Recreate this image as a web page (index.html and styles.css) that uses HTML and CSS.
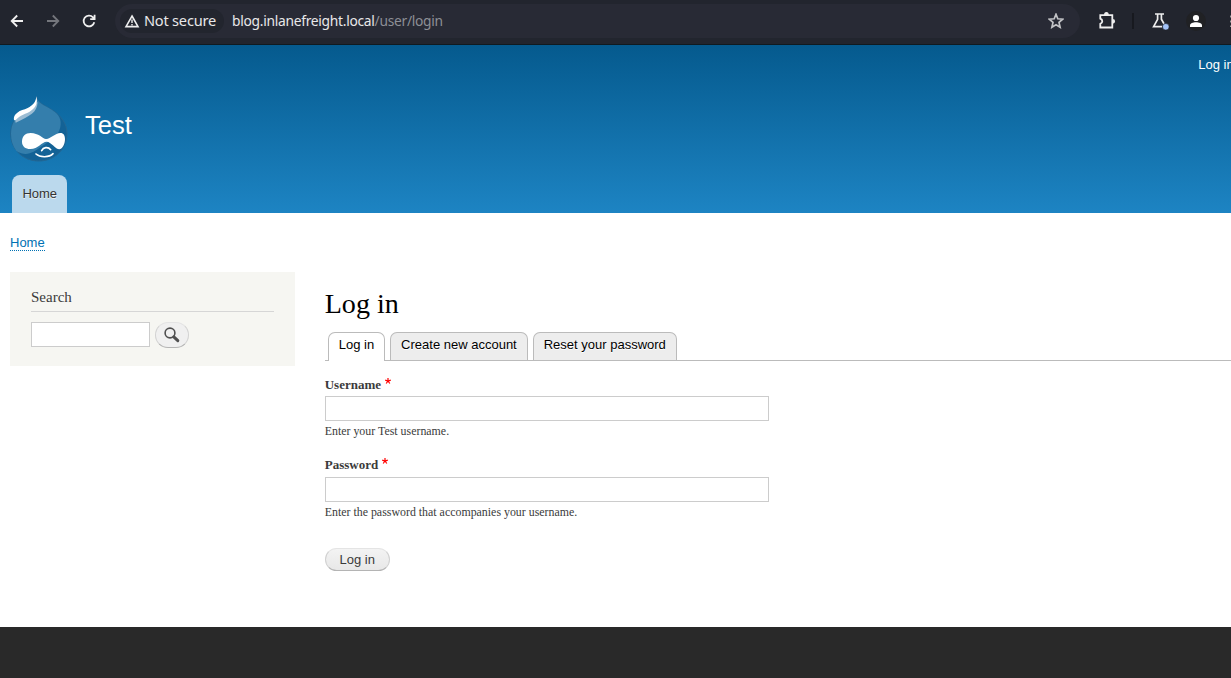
FILE: index.html
```html
<!DOCTYPE html>
<html lang="en">
<head>
<meta charset="utf-8">
<title>Log in | Test</title>
<link rel="stylesheet" href="styles.css">
</head>
<body>
<div class="toolbar">
  <svg class="icon back" viewBox="0 0 16 16"><path d="M14 8H3M8.2 2.5 2.7 8l5.5 5.5"/></svg>
  <svg class="icon forward" viewBox="0 0 16 16"><path d="M2 8h11M7.8 2.5 13.3 8l-5.5 5.5"/></svg>
  <svg class="icon reload" viewBox="0 0 16 16"><path d="M13.3 9.3A5.4 5.4 0 1 1 12 4.3l1.3 1.4M13.6 1.8v4.4H9.2"/></svg>
  <div class="omnibox">
    <div class="security">
      <svg class="warn" viewBox="0 0 16 14"><path d="M8 2 14 12.6H2Z"/><path class="mark" d="M8 5.5v3.4M8 10v1.5"/></svg>
      <span class="security-text">Not secure</span>
    </div>
    <span class="url">blog.inlanefreight.local<span class="path">/user/login</span></span>
    <svg class="star" viewBox="0 0 16 16"><path d="m8 1.3 1.8 4.5 4.9.4-3.7 3.2 1.1 4.8L8 11.7l-4.1 2.5L5 9.4 1.3 6.2l4.9-.4Z"/></svg>
  </div>
  <svg class="puzzle" viewBox="0 0 20 20"><path d="M3.3 4.1h12v12.4h-12v-3.6q2-.8 2-2.6t-2-2.6Z"/><path class="solid" d="M7 4.1a2.4 3 0 0 1 4.8 0ZM15.6 7.9a2.5 2.4 0 0 1 0 4.8Z"/></svg>
  <span class="divider"></span>
  <svg class="flask" viewBox="0 0 20 20"><path d="M5 3h9M7.6 3v5.3L3.6 15.6H12M11.4 3v5.3l2.6 4.4"/><circle cx="15.8" cy="15.8" r="3.3"/></svg>
  <svg class="avatar" viewBox="0 0 20 20"><circle class="disc" cx="10" cy="10" r="10"/><circle cx="10" cy="7" r="3.1"/><path d="M4 16v-1.5C4 12.4 7 11.3 10 11.3s6 1.1 6 3.2V16Z"/></svg>
  <span class="menu"></span>
</div>
<header class="header">
  <nav class="account"><a>Log in</a></nav>
  <div class="branding">
    <svg class="logo" viewBox="0 0 204 222">
      <path class="drop" d="M95 14c1 19 25 26 45 39 28 17 46 42 46 72 0 47-38 82-85 82s-84-36-84-82C17 93 34 70 62 57c20-10 34-19 33-43Z"/>
      <path class="light" d="M95 14c1 19 25 26 45 39 24 15 30 30 26 52-6 27-26 38-56 58-26 20-46 32-76 14-12-18-16-34-16-52C18 93 34 70 62 57c20-10 34-19 33-43Z"/>
      <path class="fade" d="M98 30c-2 32-22 41-66 62l-2-10 60-45Z"/>
      <path class="white" d="M94 13c5 18 0 32-16 43-14 10-34 13-46 28l-5 1c-2-10 2-17 10-23 9-8 20-8 31-14 16-8 25-18 26-35Z"/>
      <path class="white" d="M77 123c24 0 36 17 46 18 13 1 28-19 44-18 8 0 13 7 13 18 0 17-9 31-17 31-11 0-25-23-38-23-15 0-25 22-49 22-15 0-25-8-25-22 0-17 10-26 26-26Z"/>
      <path class="smile" d="M110 176c5-10 19-13 27-3M93 186c12 11 40 11 51-1"/>
    </svg>
    <span class="site-name">Test</span>
  </div>
  <nav class="main-menu"><a class="menu-tab">Home</a></nav>
</header>
<main class="page">
  <nav class="breadcrumb"><a>Home</a></nav>
  <div class="columns">
    <aside class="search-block">
      <h2>Search</h2>
      <div class="search-row">
        <input class="search-input" type="text">
        <button class="search-button"><svg viewBox="0 0 16 16"><circle cx="6" cy="6" r="4.9"/><path d="m9.8 9.8 4 3.8"/></svg></button>
      </div>
    </aside>
    <section class="content">
      <h1>Log in</h1>
      <div class="tabs"><a class="tab active">Log in</a><a class="tab">Create new account</a><a class="tab">Reset your password</a></div>
      <form>
        <div class="field"><label>Username<svg class="required" viewBox="0 0 6 6"><path d="M3 0v3M.2 2.1 3 3l2.8-.9M1.2 5.5 3 3l1.8 2.5"/></svg></label><input type="text"><p>Enter your Test username.</p></div>
        <div class="field second"><label>Password<svg class="required" viewBox="0 0 6 6"><path d="M3 0v3M.2 2.1 3 3l2.8-.9M1.2 5.5 3 3l1.8 2.5"/></svg></label><input type="password"><p>Enter the password that accompanies your username.</p></div>
        <button class="submit" type="button">Log in</button>
      </form>
    </section>
  </div>
</main>
</body>
</html>
```
FILE: styles.css
```css
* { box-sizing: border-box; }
body { margin: 0; height: 678px; overflow: hidden; background: #292929; color: #3b3b3b; font-family: "Liberation Serif", serif; }
svg { display: block; flex: none; fill: none; }
.toolbar { display: flex; align-items: center; height: 45px; padding: 0 0 3px 9px; background: #22252e; border-bottom: 1px solid #101a20; overflow: hidden; }
.icon { width: 16px; height: 16px; stroke: #f0f0f0; stroke-width: 1.8; }
.forward { margin-left: 20px; stroke: #74767c; }
.reload { margin-left: 20px; }
.omnibox { display: flex; flex: none; align-items: center; width: 965px; height: 34px; margin-left: 18px; padding-left: 5px; border-radius: 17px; background: #282a35; }
.security { display: flex; align-items: center; width: 104px; height: 24px; padding-left: 4px; border-radius: 12px; background: #22252e; }
.warn { width: 16px; height: 14px; stroke: #eee; stroke-width: 1.6; }
.warn .mark { stroke-width: 1.4; }
.security-text { margin: -2px 0 0 4px; color: #e8e8e9; font: 14.6px/20px "Noto Sans", sans-serif; letter-spacing: -.22px; white-space: nowrap; }
.url { width: 816px; margin-left: 8px; color: #e8e8e9; font: 13.8px/20px "Noto Sans", sans-serif; letter-spacing: -.28px; }
.path { color: #8d8f96; }
.star { width: 16px; height: 16px; stroke: #c2c3c6; stroke-width: 1.7; }
.puzzle { width: 20px; height: 20px; margin-left: 17px; stroke: #eee; stroke-width: 1.8; }
.puzzle .solid { fill: #eee; stroke: none; }
.divider { flex: none; width: 2px; height: 16px; margin-left: 15px; background: #17191f; }
.flask { width: 20px; height: 20px; margin-left: 16px; stroke: #eee; stroke-width: 1.7; }
.flask circle { fill: #a3c3f8; stroke: #22252e; stroke-width: .6; }
.avatar { width: 20px; height: 20px; margin-left: 16px; fill: #fff; }
.avatar .disc { fill: #202124; }
.menu { flex: none; width: 3px; height: 13px; margin-left: 24px; background: radial-gradient(circle, #999 1.2px, transparent 1.6px) 0 0 / 3px 5px; }
.header { height: 168px; background: linear-gradient(#055a8e, #1d84c3); font-family: "Liberation Sans", sans-serif; overflow: hidden; }
.account { height: 47px; padding: 12px 0 0 1198.3px; color: #fff; font-size: 13px; line-height: 16px; white-space: nowrap; }
.branding { display: flex; height: 83px; padding-left: 5px; }
.logo { width: 68px; height: 74px; }
.drop { fill: #136296; stroke: #246793; stroke-width: 3; }
.light { fill: #347eac; }
.fade { fill: #9bbcd3; }
.white { fill: #fff; }
.smile { stroke: #fff; stroke-width: 5; stroke-linecap: round; }
.site-name { padding: 18px 0 0 12px; color: #fff; font-size: 25.6px; line-height: 30px; }
.main-menu { display: flex; padding-left: 12px; }
.menu-tab { width: 55px; height: 38px; padding-left: .5px; border-radius: 8px 8px 0 0; background: #bbd9ed; color: #333; font-size: 13px; line-height: 37px; text-align: center; text-shadow: 0 1px #eee; }
.page { height: 414px; padding: 22px 0 0 10px; background: #fff; }
.breadcrumb { display: flex; height: 37px; font: 13px/15px "Liberation Sans", sans-serif; }
.breadcrumb a { height: 16px; border-bottom: 1px dotted #0071b3; color: #0071b3; }
.columns { display: flex; }
.search-block { flex: none; width: 285px; height: 94px; padding: 16px 21px 0; background: #f6f6f2; }
h2 { height: 24px; margin: 0 0 10px; border-bottom: 1px solid #d6d6d6; font-size: 15px; font-weight: 400; line-height: 18px; }
.search-row { display: flex; gap: 5px; }
input { display: block; width: 444px; height: 25px; padding: 4px; border: 1px solid #ccc; background: #fff; }
.search-input { width: 119px; }
.search-button { display: flex; width: 34px; height: 26px; padding: 4px 0 0 8px; border: 1px solid #d2d2d2; border-top-color: #e4e4e4; border-bottom-color: #b4b4b4; border-radius: 13px; background: #f0f0f0; }
.search-button svg { width: 16px; height: 16px; stroke: #505050; stroke-width: 1.6; }
.search-button path { stroke-width: 3; stroke-linecap: round; }
.content { flex: 1; margin-left: 29.7px; }
h1 { height: 60px; margin: 0; padding-top: 16px; color: #000; font-size: 28.1px; font-weight: 400; line-height: 32px; }
.tabs { display: flex; gap: 5px; height: 29px; padding-left: 3px; border-bottom: 1px solid #bbb; }
.tab { height: 28px; padding: 0 10px; border: 1px solid #bbb; border-bottom: 0; border-radius: 7px 7px 0 0; background: #ededed; color: #000; font: 13px/24px "Liberation Sans", sans-serif; text-shadow: 0 1px #fff; white-space: nowrap; }
.tab.active { height: 29px; background: #fff; }
.field { height: 80px; padding-top: 16px; }
.field.second { height: 81px; }
label { display: flex; height: 19px; font-size: 13px; font-weight: 700; line-height: 15px; }
.second label { height: 20px; }
.required { width: 6px; height: 6px; margin: 1px 0 0 4px; stroke: #f00; stroke-width: 1.2; }
.field p { margin: 3px 0 0; font-size: 11.9px; line-height: 15px; }
.submit { display: block; width: 65px; height: 23px; margin-top: 26px; padding: 0; border: 1px solid #d0d0d0; border-top-color: #e4e4e4; border-bottom-color: #b4b4b4; border-radius: 12px; background: linear-gradient(#f3f3f3, #e8e8e8); color: #3a3a3a; font: 13px/20px "Liberation Sans", sans-serif; }
```
